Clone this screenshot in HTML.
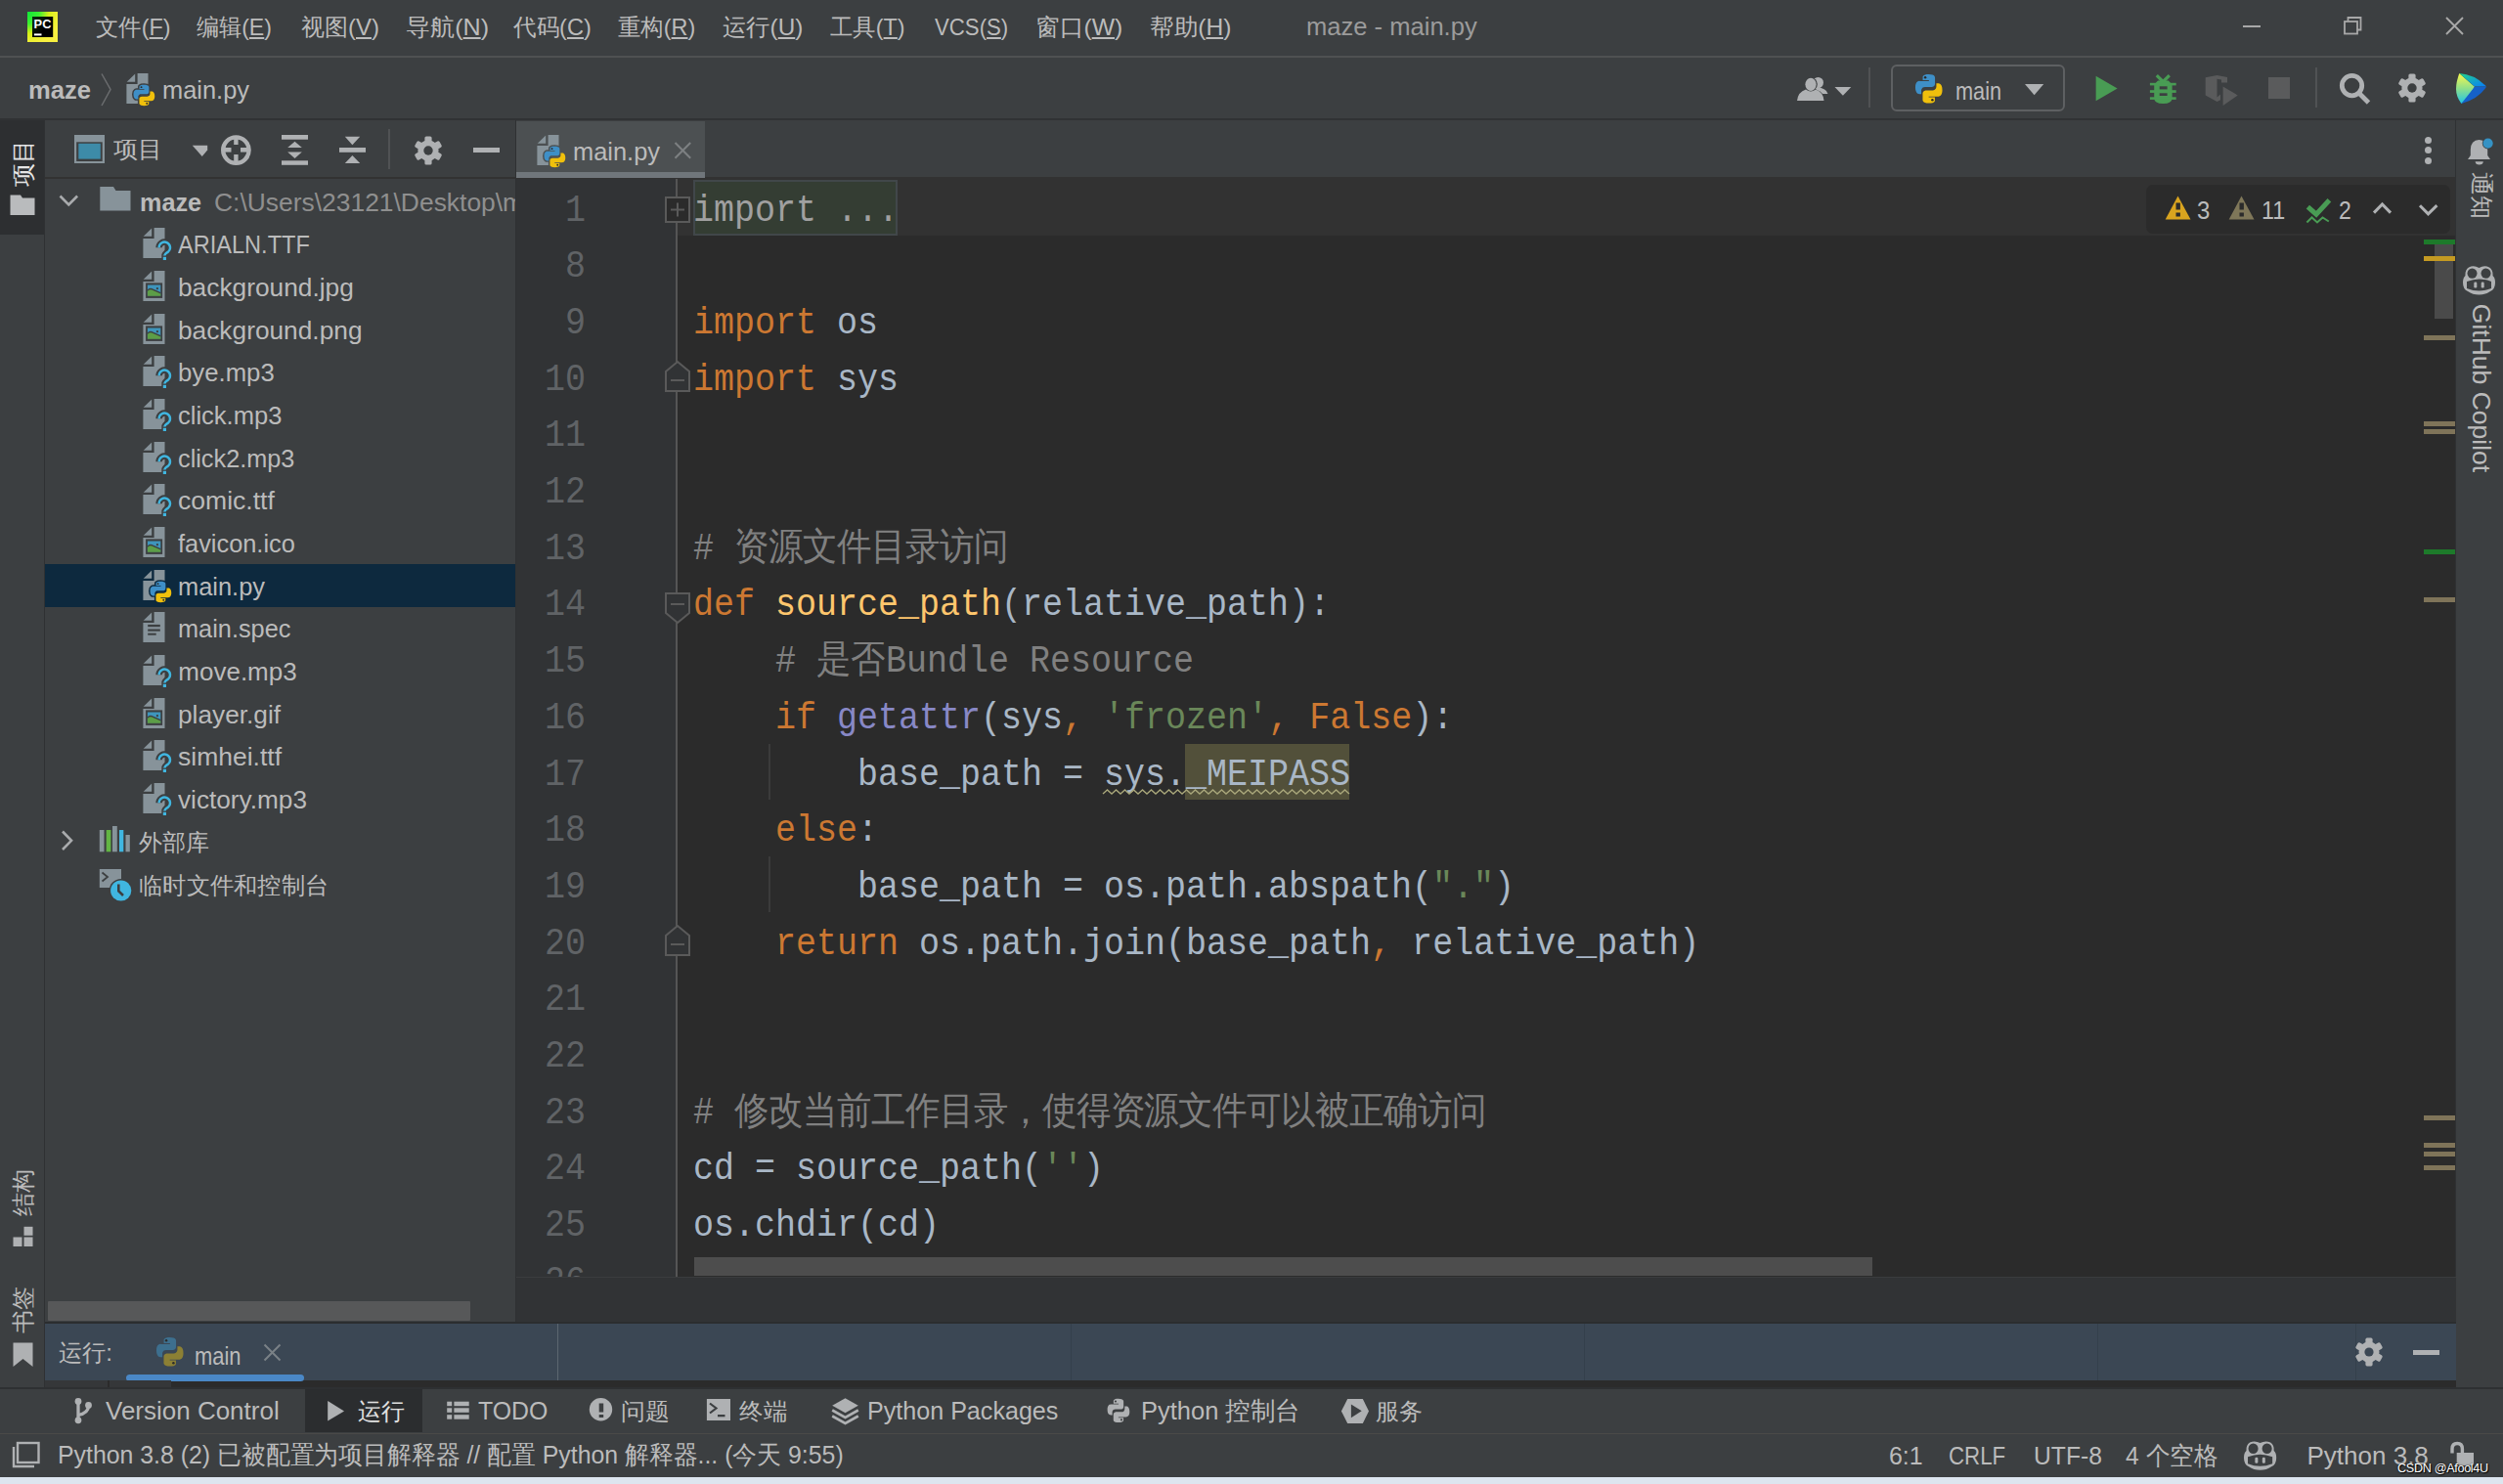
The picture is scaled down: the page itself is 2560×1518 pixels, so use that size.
<!DOCTYPE html>
<html><head><meta charset="utf-8"><title>maze - main.py</title>
<style>
html,body{margin:0;padding:0;}
body{width:2560px;height:1518px;overflow:hidden;position:relative;background:#3C3F41;font-family:"Liberation Sans",sans-serif;}
.t{position:absolute;white-space:nowrap;line-height:1;}
.u{text-decoration:underline;text-decoration-thickness:2px;text-underline-offset:2px;}
svg{overflow:visible}
.code{font-family:'Liberation Mono',monospace;font-size:38.5px;color:#A9B7C6;white-space:pre;transform:scaleX(0.9091);transform-origin:0 0;}
.lnum{font-family:'Liberation Mono',monospace;font-size:38.5px;color:#606366;width:200px;text-align:right;transform:scaleX(0.9091);transform-origin:100% 0;}
</style></head><body>
<div style="position:absolute;left:0px;top:0px;width:2560px;height:57px;background:#3C3F41;"></div>
<div style="position:absolute;left:0px;top:57px;width:2560px;height:2px;background:#4F5152;"></div>
<div style="position:absolute;left:0px;top:59px;width:2560px;height:63px;background:#3C3F41;"></div>
<div style="position:absolute;left:0px;top:121px;width:2560px;height:2px;background:#303234;"></div>
<div style="position:absolute;left:0px;top:123px;width:45px;height:1297px;background:#3C3F41;"></div>
<div style="position:absolute;left:0px;top:123px;width:45px;height:117px;background:#2D2F31;"></div>
<div style="position:absolute;left:45px;top:123px;width:1px;height:1297px;background:#2F3133;"></div>
<div style="position:absolute;left:46px;top:123px;width:481px;height:1229px;background:#3C3F41;"></div>
<div style="position:absolute;left:46px;top:181px;width:481px;height:2px;background:#323232;"></div>
<div style="position:absolute;left:527px;top:123px;width:1px;height:1229px;background:#2F3133;"></div>
<div style="position:absolute;left:528px;top:123px;width:1984px;height:58px;background:#3C3F41;"></div>
<div style="position:absolute;left:528px;top:181px;width:1984px;height:2px;background:#323232;"></div>
<div style="position:absolute;left:528px;top:124px;width:193px;height:52px;background:#4C5052;"></div>
<div style="position:absolute;left:528px;top:176px;width:193px;height:6px;background:#70767B;"></div>
<div style="position:absolute;left:528px;top:183px;width:1984px;height:1124px;background:#2B2B2B;"></div>
<div style="position:absolute;left:528px;top:183px;width:163px;height:1124px;background:#313335;"></div>
<div style="position:absolute;left:691px;top:183px;width:2px;height:1124px;background:#555555;"></div>
<div style="position:absolute;left:693px;top:183px;width:1819px;height:58px;background:#323232;"></div>
<div style="position:absolute;left:528px;top:1307px;width:1984px;height:45px;background:#313335;"></div>
<div style="position:absolute;left:528px;top:1306px;width:1984px;height:1px;background:#3A3C3E;"></div>
<div style="position:absolute;left:2512px;top:123px;width:48px;height:1297px;background:#3C3F41;"></div>
<div style="position:absolute;left:2511px;top:123px;width:1px;height:1297px;background:#2F3133;"></div>
<div style="position:absolute;left:46px;top:1352px;width:2466px;height:2px;background:#2B2D2F;"></div>
<div style="position:absolute;left:46px;top:1354px;width:2466px;height:58px;background:#3B4754;"></div>
<div style="position:absolute;left:46px;top:1412px;width:2466px;height:8px;background:#2B2B2B;"></div>
<div style="position:absolute;left:0px;top:1420px;width:2560px;height:46px;background:#3C3F41;"></div>
<div style="position:absolute;left:312px;top:1420px;width:120px;height:45px;background:#2B2D2F;"></div>
<div style="position:absolute;left:0px;top:1466px;width:2560px;height:1px;background:#4A4A48;"></div>
<div style="position:absolute;left:0px;top:1467px;width:2560px;height:45px;background:#3C3F41;"></div>
<div style="position:absolute;left:0px;top:1511px;width:2560px;height:7px;background:#DDE5EF;"></div>
<div class="t" id="t1" style="left:98px;top:15.68px;font-size:24px;color:#BBBBBB;font-family:'Liberation Sans', sans-serif;font-weight:normal;transform:scaleX(0.9744);transform-origin:0 0;">文件(<span class="u">F</span>)</div>
<div class="t" id="t2" style="left:201px;top:15.68px;font-size:24px;color:#BBBBBB;font-family:'Liberation Sans', sans-serif;font-weight:normal;transform:scaleX(0.9620);transform-origin:0 0;">编辑(<span class="u">E</span>)</div>
<div class="t" id="t3" style="left:308px;top:15.68px;font-size:24px;color:#BBBBBB;font-family:'Liberation Sans', sans-serif;font-weight:normal;transform:scaleX(1.0000);transform-origin:0 0;">视图(<span class="u">V</span>)</div>
<div class="t" id="t4" style="left:415px;top:15.68px;font-size:24px;color:#BBBBBB;font-family:'Liberation Sans', sans-serif;font-weight:normal;transform:scaleX(1.0456);transform-origin:0 0;">导航(<span class="u">N</span>)</div>
<div class="t" id="t5" style="left:525px;top:15.68px;font-size:24px;color:#BBBBBB;font-family:'Liberation Sans', sans-serif;font-weight:normal;transform:scaleX(0.9812);transform-origin:0 0;">代码(<span class="u">C</span>)</div>
<div class="t" id="t6" style="left:632px;top:15.68px;font-size:24px;color:#BBBBBB;font-family:'Liberation Sans', sans-serif;font-weight:normal;transform:scaleX(0.9750);transform-origin:0 0;">重构(<span class="u">R</span>)</div>
<div class="t" id="t7" style="left:738.5px;top:15.68px;font-size:24px;color:#BBBBBB;font-family:'Liberation Sans', sans-serif;font-weight:normal;transform:scaleX(1.0125);transform-origin:0 0;">运行(<span class="u">U</span>)</div>
<div class="t" id="t8" style="left:849px;top:15.68px;font-size:24px;color:#BBBBBB;font-family:'Liberation Sans', sans-serif;font-weight:normal;transform:scaleX(0.9744);transform-origin:0 0;">工具(<span class="u">T</span>)</div>
<div class="t" id="t9" style="left:956px;top:15.68px;font-size:24px;color:#BBBBBB;font-family:'Liberation Sans', sans-serif;font-weight:normal;transform:scaleX(0.9250);transform-origin:0 0;">VCS(<span class="u">S</span>)</div>
<div class="t" id="t10" style="left:1059px;top:15.68px;font-size:24px;color:#BBBBBB;font-family:'Liberation Sans', sans-serif;font-weight:normal;transform:scaleX(1.0298);transform-origin:0 0;">窗口(<span class="u">W</span>)</div>
<div class="t" id="t11" style="left:1176px;top:15.68px;font-size:24px;color:#BBBBBB;font-family:'Liberation Sans', sans-serif;font-weight:normal;transform:scaleX(1.0250);transform-origin:0 0;">帮助(<span class="u">H</span>)</div>
<div class="t" id="t12" style="left:1336px;top:13.99px;font-size:26px;color:#9B9B9B;font-family:'Liberation Sans', sans-serif;font-weight:normal;transform:scaleX(0.9831);transform-origin:0 0;">maze - main.py</div>
<div class="t" id="t13" style="left:29px;top:78.99px;font-size:26px;color:#BBBBBB;font-family:'Liberation Sans', sans-serif;font-weight:bold;transform:scaleX(0.9844);transform-origin:0 0;">maze</div>
<div class="t" id="t14" style="left:166px;top:78.99px;font-size:26px;color:#BBBBBB;font-family:'Liberation Sans', sans-serif;font-weight:normal;transform:scaleX(0.9778);transform-origin:0 0;">main.py</div>
<div class="t" id="t15" style="left:2000px;top:79.99px;font-size:26px;color:#BBBBBB;font-family:'Liberation Sans', sans-serif;font-weight:normal;transform:scaleX(0.8359);transform-origin:0 0;">main</div>
<div class="t" id="t16" style="left:116px;top:141.18px;font-size:24px;color:#BBBBBB;font-family:'Liberation Sans', sans-serif;font-weight:normal;transform:scaleX(1.0455);transform-origin:0 0;">项目</div>
<div class="t" id="t17" style="left:586px;top:141.99px;font-size:26px;color:#BBBBBB;font-family:'Liberation Sans', sans-serif;font-weight:normal;transform:scaleX(0.9778);transform-origin:0 0;">main.py</div>
<div class="t" id="t18" style="left:143px;top:193.59px;font-size:26px;color:#BBBBBB;font-family:'Liberation Sans', sans-serif;font-weight:bold;transform:scaleX(0.9688);transform-origin:0 0;">maze</div>
<div style="position:absolute;left:46px;top:577px;width:481px;height:43.6px;background:#0D293E;"></div>
<div style="position:absolute;left:46px;top:183px;width:481px;height:60px;overflow:hidden"><div style="position:absolute;left:-46px;top:-183px;width:2560px;height:1518px">
<div class="t" id="t19" style="left:219px;top:193.59px;font-size:26px;color:#8F8F8F;font-family:'Liberation Sans', sans-serif;font-weight:normal;transform:scaleX(1.016);transform-origin:0 0;">C:\Users\23121\Desktop\maze</div>
</div></div>
<div class="t" id="t20" style="left:182.3px;top:237.27px;font-size:26px;color:#BBBBBB;font-family:'Liberation Sans', sans-serif;font-weight:normal;transform:scaleX(0.9060);transform-origin:0 0;">ARIALN.TTF</div>
<div class="t" id="t21" style="left:182.3px;top:280.95px;font-size:26px;color:#BBBBBB;font-family:'Liberation Sans', sans-serif;font-weight:normal;transform:scaleX(1.0114);transform-origin:0 0;">background.jpg</div>
<div class="t" id="t22" style="left:182.3px;top:324.63px;font-size:26px;color:#BBBBBB;font-family:'Liberation Sans', sans-serif;font-weight:normal;transform:scaleX(1.0108);transform-origin:0 0;">background.png</div>
<div class="t" id="t23" style="left:182.3px;top:368.31px;font-size:26px;color:#BBBBBB;font-family:'Liberation Sans', sans-serif;font-weight:normal;transform:scaleX(0.9898);transform-origin:0 0;">bye.mp3</div>
<div class="t" id="t24" style="left:182.3px;top:411.99px;font-size:26px;color:#BBBBBB;font-family:'Liberation Sans', sans-serif;font-weight:normal;transform:scaleX(0.9813);transform-origin:0 0;">click.mp3</div>
<div class="t" id="t25" style="left:182.3px;top:455.67px;font-size:26px;color:#BBBBBB;font-family:'Liberation Sans', sans-serif;font-weight:normal;transform:scaleX(0.9721);transform-origin:0 0;">click2.mp3</div>
<div class="t" id="t26" style="left:182.3px;top:499.35px;font-size:26px;color:#BBBBBB;font-family:'Liberation Sans', sans-serif;font-weight:normal;transform:scaleX(1.0206);transform-origin:0 0;">comic.ttf</div>
<div class="t" id="t27" style="left:182.3px;top:543.03px;font-size:26px;color:#BBBBBB;font-family:'Liberation Sans', sans-serif;font-weight:normal;transform:scaleX(0.9756);transform-origin:0 0;">favicon.ico</div>
<div class="t" id="t28" style="left:182.3px;top:586.71px;font-size:26px;color:#BBBBBB;font-family:'Liberation Sans', sans-serif;font-weight:normal;transform:scaleX(0.9780);transform-origin:0 0;">main.py</div>
<div class="t" id="t29" style="left:182.3px;top:630.39px;font-size:26px;color:#BBBBBB;font-family:'Liberation Sans', sans-serif;font-weight:normal;transform:scaleX(0.9741);transform-origin:0 0;">main.spec</div>
<div class="t" id="t30" style="left:182.3px;top:674.07px;font-size:26px;color:#BBBBBB;font-family:'Liberation Sans', sans-serif;font-weight:normal;transform:scaleX(1.0000);transform-origin:0 0;">move.mp3</div>
<div class="t" id="t31" style="left:182.3px;top:717.75px;font-size:26px;color:#BBBBBB;font-family:'Liberation Sans', sans-serif;font-weight:normal;transform:scaleX(1.0096);transform-origin:0 0;">player.gif</div>
<div class="t" id="t32" style="left:182.3px;top:761.43px;font-size:26px;color:#BBBBBB;font-family:'Liberation Sans', sans-serif;font-weight:normal;transform:scaleX(1.0192);transform-origin:0 0;">simhei.ttf</div>
<div class="t" id="t33" style="left:182.3px;top:805.11px;font-size:26px;color:#BBBBBB;font-family:'Liberation Sans', sans-serif;font-weight:normal;transform:scaleX(1.0076);transform-origin:0 0;">victory.mp3</div>
<div class="t" id="t34" style="left:142px;top:850.48px;font-size:24px;color:#BBBBBB;font-family:'Liberation Sans', sans-serif;font-weight:normal;transform:scaleX(1.0000);transform-origin:0 0;">外部库</div>
<div class="t" id="t35" style="left:142.4px;top:894.16px;font-size:24px;color:#BBBBBB;font-family:'Liberation Sans', sans-serif;font-weight:normal;transform:scaleX(1.0106);transform-origin:0 0;">临时文件和控制台</div>
<div class="t" id="t36" style="left:60px;top:1372.18px;font-size:24px;color:#BBBBBB;font-family:'Liberation Sans', sans-serif;font-weight:normal;transform:scaleX(1.0075);transform-origin:0 0;">运行:</div>
<div class="t" id="t37" style="left:199px;top:1373.99px;font-size:26px;color:#BBBBBB;font-family:'Liberation Sans', sans-serif;font-weight:normal;transform:scaleX(0.8438);transform-origin:0 0;">main</div>
<div class="t" id="t38" style="left:107.5px;top:1429.99px;font-size:26px;color:#BBBBBB;font-family:'Liberation Sans', sans-serif;font-weight:normal;transform:scaleX(0.9994);transform-origin:0 0;">Version Control</div>
<div class="t" id="t39" style="left:365.7px;top:1431.68px;font-size:24px;color:#E0E0E0;font-family:'Liberation Sans', sans-serif;font-weight:normal;transform:scaleX(0.9958);transform-origin:0 0;">运行</div>
<div class="t" id="t40" style="left:488.5px;top:1429.99px;font-size:26px;color:#BBBBBB;font-family:'Liberation Sans', sans-serif;font-weight:normal;transform:scaleX(0.9562);transform-origin:0 0;">TODO</div>
<div class="t" id="t41" style="left:635px;top:1431.68px;font-size:24px;color:#BBBBBB;font-family:'Liberation Sans', sans-serif;font-weight:normal;transform:scaleX(1.0370);transform-origin:0 0;">问题</div>
<div class="t" id="t42" style="left:755.8px;top:1431.68px;font-size:24px;color:#BBBBBB;font-family:'Liberation Sans', sans-serif;font-weight:normal;transform:scaleX(1.0213);transform-origin:0 0;">终端</div>
<div class="t" id="t43" style="left:886.9px;top:1429.99px;font-size:26px;color:#BBBBBB;font-family:'Liberation Sans', sans-serif;font-weight:normal;transform:scaleX(0.9655);transform-origin:0 0;">Python Packages</div>
<div class="t" id="t44" style="left:1166.5px;top:1429.99px;font-size:26px;color:#BBBBBB;font-family:'Liberation Sans', sans-serif;font-weight:normal;transform:scaleX(0.9804);transform-origin:0 0;">Python 控制台</div>
<div class="t" id="t45" style="left:1407px;top:1431.68px;font-size:24px;color:#BBBBBB;font-family:'Liberation Sans', sans-serif;font-weight:normal;transform:scaleX(1.0000);transform-origin:0 0;">服务</div>
<div class="t" id="t46" style="left:58.6px;top:1474.99px;font-size:26px;color:#BBBBBB;font-family:'Liberation Sans', sans-serif;font-weight:normal;transform:scaleX(0.9558);transform-origin:0 0;">Python 3.8 (2) 已被配置为项目解释器 // 配置 Python 解释器... (今天 9:55)</div>
<div class="t" id="t47" style="left:1931.8px;top:1475.99px;font-size:26px;color:#BBBBBB;font-family:'Liberation Sans', sans-serif;font-weight:normal;transform:scaleX(0.9588);transform-origin:0 0;">6:1</div>
<div class="t" id="t48" style="left:1993px;top:1475.99px;font-size:26px;color:#BBBBBB;font-family:'Liberation Sans', sans-serif;font-weight:normal;transform:scaleX(0.8576);transform-origin:0 0;">CRLF</div>
<div class="t" id="t49" style="left:2079.5px;top:1475.99px;font-size:26px;color:#BBBBBB;font-family:'Liberation Sans', sans-serif;font-weight:normal;transform:scaleX(0.9486);transform-origin:0 0;">UTF-8</div>
<div class="t" id="t50" style="left:2174.2px;top:1475.99px;font-size:26px;color:#BBBBBB;font-family:'Liberation Sans', sans-serif;font-weight:normal;transform:scaleX(0.9475);transform-origin:0 0;">4 个空格</div>
<div class="t" id="t51" style="left:2359.5px;top:1475.99px;font-size:26px;color:#BBBBBB;font-family:'Liberation Sans', sans-serif;font-weight:normal;transform:scaleX(1.0000);transform-origin:0 0;">Python 3.8</div>
<div style="position:absolute;left:1212px;top:761px;width:168px;height:57px;background:#52503A;"></div>
<div style="position:absolute;left:709px;top:184px;width:209px;height:57px;background:#343D33;box-sizing:border-box;border:2.5px solid #41474A;"></div>
<div class="t code" style="left:709px;top:196.51px;"><span style="color:#A0A0A0">import ...</span></div>
<div class="t code" style="left:709px;top:311.91px;"><span style="color:#CC7832">import</span> os</div>
<div class="t code" style="left:709px;top:369.61px;"><span style="color:#CC7832">import</span> sys</div>
<div class="t code" style="left:709px;top:542.71px;"><span style="color:#808080"># <span style="letter-spacing:-0.55px">资源文件目录访问</span></span></div>
<div class="t code" style="left:709px;top:600.41px;"><span style="color:#CC7832">def</span> <span style="color:#FFC66D">source_path</span>(relative_path):</div>
<div class="t code" style="left:793px;top:658.11px;"><span style="color:#808080"># 是否Bundle Resource</span></div>
<div class="t code" style="left:793px;top:715.81px;"><span style="color:#CC7832">if</span> <span style="color:#8888C6">getattr</span>(sys<span style="color:#CC7832">,</span> <span style="color:#6A8759">'frozen'</span><span style="color:#CC7832">,</span> <span style="color:#CC7832">False</span>):</div>
<div class="t code" style="left:877px;top:773.51px;">base_path = sys._MEIPASS</div>
<div class="t code" style="left:793px;top:831.21px;"><span style="color:#CC7832">else</span>:</div>
<div class="t code" style="left:877px;top:888.91px;">base_path = os.path.abspath(<span style="color:#6A8759">"."</span>)</div>
<div class="t code" style="left:793px;top:946.61px;"><span style="color:#CC7832">return</span> os.path.join(base_path<span style="color:#CC7832">,</span> relative_path)</div>
<div class="t code" style="left:709px;top:1119.71px;"><span style="color:#808080"># <span style="letter-spacing:-0.55px">修改当前工作目录，使得资源文件可以被正确访问</span></span></div>
<div class="t code" style="left:709px;top:1177.41px;">cd = source_path(<span style="color:#6A8759">''</span>)</div>
<div class="t code" style="left:709px;top:1235.11px;">os.chdir(cd)</div>
<div class="t lnum" style="left:399px;top:196.51px;">1</div>
<div class="t lnum" style="left:399px;top:254.21px;">8</div>
<div class="t lnum" style="left:399px;top:311.91px;">9</div>
<div class="t lnum" style="left:399px;top:369.61px;">10</div>
<div class="t lnum" style="left:399px;top:427.31px;">11</div>
<div class="t lnum" style="left:399px;top:485.01px;">12</div>
<div class="t lnum" style="left:399px;top:542.71px;">13</div>
<div class="t lnum" style="left:399px;top:600.41px;">14</div>
<div class="t lnum" style="left:399px;top:658.11px;">15</div>
<div class="t lnum" style="left:399px;top:715.81px;">16</div>
<div class="t lnum" style="left:399px;top:773.51px;">17</div>
<div class="t lnum" style="left:399px;top:831.21px;">18</div>
<div class="t lnum" style="left:399px;top:888.91px;">19</div>
<div class="t lnum" style="left:399px;top:946.61px;">20</div>
<div class="t lnum" style="left:399px;top:1004.31px;">21</div>
<div class="t lnum" style="left:399px;top:1062.01px;">22</div>
<div class="t lnum" style="left:399px;top:1119.71px;">23</div>
<div class="t lnum" style="left:399px;top:1177.41px;">24</div>
<div class="t lnum" style="left:399px;top:1235.11px;">25</div>
<div class="t lnum" style="left:399px;top:1292.81px;">26</div>
<svg style="position:absolute;left:28px;top:12px" width="31" height="31" viewBox="0 0 31 31"><defs><radialGradient id="pcg" cx="0" cy="0" r="1.1" gradientUnits="objectBoundingBox"><stop offset="0" stop-color="#0FE83A"/><stop offset="0.35" stop-color="#3AF030"/><stop offset="0.65" stop-color="#D8F018"/><stop offset="1" stop-color="#F8F040"/></radialGradient><linearGradient id="pci" x1="0" y1="0" x2="1" y2="1"><stop offset="0" stop-color="#0A3010"/><stop offset="0.6" stop-color="#000"/></linearGradient></defs><rect width="31" height="31" fill="url(#pcg)"/><rect x="5" y="5" width="21.2" height="21" fill="url(#pci)"/><text x="6.6" y="17.2" font-family="Liberation Sans" font-weight="bold" font-size="12.8" fill="#fff">PC</text><rect x="6.9" y="22.4" width="7.6" height="2" fill="#fff"/></svg>
<div style="position:absolute;left:2294px;top:26px;width:18px;height:2px;background:#A8A8A8;"></div>
<svg style="position:absolute;left:2397px;top:17px" width="19" height="19" viewBox="0 0 19 19"><path d="M4.5 4.5V1H17.5V13.5H14" fill="none" stroke="#A8A8A8" stroke-width="1.8"/><rect x="1" y="5" width="13" height="12.5" fill="none" stroke="#A8A8A8" stroke-width="1.8"/></svg>
<svg style="position:absolute;left:2501px;top:17px" width="19" height="19" viewBox="0 0 19 19"><path d="M1 1L18 18M18 1L1 18" stroke="#A8A8A8" stroke-width="1.9"/></svg>
<svg style="position:absolute;left:103px;top:75px" width="11" height="34" viewBox="0 0 11 34"><path d="M1 0.5L10 16.5L1 33" fill="none" stroke="#6B6D6F" stroke-width="1.5"/></svg>
<svg style="position:absolute;left:129px;top:75px" width="30" height="34" viewBox="0 0 30 34"><path d="M0.7 8.8L9.2 0.5V8.8Z" fill="#87939A"/><path d="M11.6 0H22.5V31H0.4V11H11.6Z" fill="#87939A"/></svg>
<svg style="position:absolute;left:134.95px;top:86.2px;overflow:visible" width="24.8" height="22.9" viewBox="0 0 32 32" preserveAspectRatio="none"><path d="M15.9 1C9.3 1 9.7 3.9 9.7 3.9V7h6.4v1H6.5S2 7.5 2 14.6c0 7.1 3.9 6.9 3.9 6.9h2.3v-3.3s-.1-3.9 3.9-3.9h6.6s3.7.1 3.7-3.6V4.6S23 1 15.9 1z" fill="#3C3F41" stroke="#3C3F41" stroke-width="4"/><path d="M16.1 31c6.6 0 6.2-2.9 6.2-2.9V25h-6.4v-1h9.6s4.5.5 4.5-6.6c0-7.1-3.9-6.9-3.9-6.9h-2.3v3.3s.1 3.9-3.9 3.9h-6.6s-3.7-.1-3.7 3.6v6.1S9 31 16.1 31z" fill="#3C3F41" stroke="#3C3F41" stroke-width="4"/><path d="M15.9 1C9.3 1 9.7 3.9 9.7 3.9V7h6.4v1H6.5S2 7.5 2 14.6c0 7.1 3.9 6.9 3.9 6.9h2.3v-3.3s-.1-3.9 3.9-3.9h6.6s3.7.1 3.7-3.6V4.6S23 1 15.9 1z" fill="#3E8FC7"/><path d="M16.1 31c6.6 0 6.2-2.9 6.2-2.9V25h-6.4v-1h9.6s4.5.5 4.5-6.6c0-7.1-3.9-6.9-3.9-6.9h-2.3v3.3s.1 3.9-3.9 3.9h-6.6s-3.7-.1-3.7 3.6v6.1S9 31 16.1 31z" fill="#F0C00C"/><circle cx="12.3" cy="4.4" r="1.25" fill="#2B2B2B"/><circle cx="19.7" cy="27.6" r="1.25" fill="#2B2B2B"/></svg>
<svg style="position:absolute;left:1838px;top:78px" width="32" height="26" viewBox="0 0 32 26"><circle cx="21.5" cy="6.5" r="5.5" fill="#AFB1B3"/><path d="M18 10.5Q30.5 12 31.5 18H22Z" fill="#AFB1B3"/><circle cx="14" cy="8" r="6.8" fill="#3C3F41"/><path d="M6.5 12Q2 18 0.5 25.5H28Q28 16 20 14Z" fill="#3C3F41"/><ellipse cx="14" cy="8.3" rx="5.6" ry="6.6" fill="#AFB1B3"/><path d="M9 13.5Q1 16 0 25H27.5Q27 16.5 19 13.5Q14 17.5 9 13.5Z" fill="#AFB1B3"/></svg>
<svg style="position:absolute;left:1876px;top:88px" width="18" height="10" viewBox="0 0 18 10"><path d="M0.5 1H17.3L8.9 9.8Z" fill="#AFB1B3"/></svg>
<div style="position:absolute;left:1911px;top:69px;width:2px;height:41px;background:#505254;"></div>
<div style="position:absolute;left:1934px;top:66px;width:178px;height:48px;box-sizing:border-box;border:2px solid #5E6062;border-radius:6px"></div>
<svg style="position:absolute;left:1956.5px;top:74.8px;overflow:visible" width="31.5" height="31.5" viewBox="0 0 32 32" preserveAspectRatio="none"><path d="M15.9 1C9.3 1 9.7 3.9 9.7 3.9V7h6.4v1H6.5S2 7.5 2 14.6c0 7.1 3.9 6.9 3.9 6.9h2.3v-3.3s-.1-3.9 3.9-3.9h6.6s3.7.1 3.7-3.6V4.6S23 1 15.9 1z" fill="#3E8FC7"/><path d="M16.1 31c6.6 0 6.2-2.9 6.2-2.9V25h-6.4v-1h9.6s4.5.5 4.5-6.6c0-7.1-3.9-6.9-3.9-6.9h-2.3v3.3s.1 3.9-3.9 3.9h-6.6s-3.7-.1-3.7 3.6v6.1S9 31 16.1 31z" fill="#F0C00C"/><circle cx="12.3" cy="4.4" r="1.25" fill="#2B2B2B"/><circle cx="19.7" cy="27.6" r="1.25" fill="#2B2B2B"/></svg>
<svg style="position:absolute;left:2071px;top:85px" width="20" height="13" viewBox="0 0 20 13"><path d="M0 1H19.2L9.6 12.2Z" fill="#AFB1B3"/></svg>
<svg style="position:absolute;left:2143px;top:77px" width="24" height="27" viewBox="0 0 24 27"><path d="M0.6 0.7L22.6 13.5L0.6 26.2Z" fill="#499C54"/></svg>
<svg style="position:absolute;left:2198px;top:74px" width="29" height="33" viewBox="0 0 29 33"><g fill="#499C54"><path d="M8.9 2L14.3 7.3L19.7 2L21.9 4.2L16.2 9.9H12.4L6.7 4.2Z"/><path d="M9 8.5H19.8L23.6 12.5V26Q23.6 32 14.4 32Q5.2 32 5.2 26V12.5Z"/><rect x="0.9" y="10.8" width="26.8" height="2.6"/><rect x="0.9" y="18.2" width="26.8" height="2.7"/><rect x="0.9" y="25.3" width="26.8" height="2.6"/></g><rect x="10.7" y="14.3" width="7.9" height="3.1" fill="#3C3F41"/><rect x="10.7" y="21.3" width="7.9" height="2.7" fill="#3C3F41"/></svg>
<svg style="position:absolute;left:2255px;top:76px" width="35" height="33" viewBox="0 0 35 33"><path d="M12.5 1L23 3V8.5H17V5.5L12.5 4.8V23.5L16 20.5V26.3L12.5 28L0.7 21.5V3.2Z" fill="#5A5B5C"/><path d="M18.6 12.6L33.7 21.5L18.6 32Z" fill="#5A5B5C"/></svg>
<div style="position:absolute;left:2320px;top:79px;width:22px;height:22px;background:#5A5B5C;"></div>
<div style="position:absolute;left:2368px;top:69px;width:2px;height:41px;background:#505254;"></div>
<svg style="position:absolute;left:2392px;top:74px" width="33" height="34" viewBox="0 0 33 34"><circle cx="13.5" cy="13.6" r="10.2" fill="none" stroke="#AFB1B3" stroke-width="4.8"/><path d="M20.5 21L30.5 31" stroke="#AFB1B3" stroke-width="4.8"/></svg>
<svg style="position:absolute;left:2451.4px;top:74.3px" width="32" height="32" viewBox="0 0 32 32"><g transform="translate(16 16)"><circle cx="0" cy="0" r="10.6" fill="#AFB1B3"/><rect x="-3.6" y="-14.5" width="7.2" height="14.5" rx="1.6" fill="#AFB1B3" transform="rotate(0)"/><rect x="-3.6" y="-14.5" width="7.2" height="14.5" rx="1.6" fill="#AFB1B3" transform="rotate(60)"/><rect x="-3.6" y="-14.5" width="7.2" height="14.5" rx="1.6" fill="#AFB1B3" transform="rotate(120)"/><rect x="-3.6" y="-14.5" width="7.2" height="14.5" rx="1.6" fill="#AFB1B3" transform="rotate(180)"/><rect x="-3.6" y="-14.5" width="7.2" height="14.5" rx="1.6" fill="#AFB1B3" transform="rotate(240)"/><rect x="-3.6" y="-14.5" width="7.2" height="14.5" rx="1.6" fill="#AFB1B3" transform="rotate(300)"/><circle cx="0" cy="0" r="4.7" fill="#3C3F41"/></g></svg>
<svg style="position:absolute;left:2511px;top:74px" width="33" height="33" viewBox="0 0 33 33"><defs><linearGradient id="jl1" x1="0" y1="0" x2="0" y2="1"><stop offset="0" stop-color="#FCF84A"/><stop offset="0.5" stop-color="#8FE08A"/><stop offset="1" stop-color="#1EC4E8"/></linearGradient><linearGradient id="jl2" x1="0" y1="0" x2="1" y2="1"><stop offset="0" stop-color="#21D789"/><stop offset="1" stop-color="#087CFA"/></linearGradient></defs><path d="M4.3 1Q1 10 1 17Q1 25 6.4 32Q12 28 20 14.7Z" fill="url(#jl1)"/><path d="M4.3 1Q20 2 32 14.4H20Z" fill="url(#jl2)"/><path d="M20 14.7H32Q24 27 6.4 32Z" fill="#1561C9"/></svg>
<div class="t" style="left:24px;top:166.5px;font-size:24px;color:#E6E6E6;transform:translate(-50%,-50%) rotate(-90deg);">项目</div>
<svg style="position:absolute;left:10px;top:199px" width="26" height="22" viewBox="0 0 26 22"><path d="M0.5 0.5H11L13 3.5H25.5V21H0.5Z" fill="#B9BBBD"/></svg>
<div class="t" style="left:23.6px;top:1219.7px;font-size:24px;color:#BBBBBB;transform:translate(-50%,-50%) rotate(-90deg);">结构</div>
<svg style="position:absolute;left:13px;top:1254px" width="21" height="22" viewBox="0 0 21 22"><rect x="0.5" y="11.5" width="9" height="9.5" fill="#AFB1B3"/><rect x="11.5" y="11.5" width="9" height="9.5" fill="#AFB1B3"/><rect x="11.5" y="0.8" width="9" height="9" fill="#AFB1B3"/></svg>
<div class="t" style="left:23.6px;top:1340px;font-size:24px;color:#BBBBBB;transform:translate(-50%,-50%) rotate(-90deg);">书签</div>
<svg style="position:absolute;left:13px;top:1373px" width="21" height="26" viewBox="0 0 21 26"><path d="M0.5 0.5H20.5V25L10.5 17L0.5 25Z" fill="#AFB1B3"/></svg>
<svg style="position:absolute;left:76px;top:138px" width="31" height="29" viewBox="0 0 31 29"><rect width="31" height="29" fill="#87939A"/><rect x="2.2" y="7.3" width="26.5" height="19.7" fill="#3C3F41"/><rect x="4.3" y="8.8" width="22.5" height="15.8" fill="#3D8BA8"/></svg>
<svg style="position:absolute;left:196px;top:148px" width="17" height="13" viewBox="0 0 17 13"><path d="M0.8 0.8H16.2V5.5L10.7 12Z" fill="#AFB1B3"/></svg>
<svg style="position:absolute;left:225px;top:137px" width="33" height="33" viewBox="0 0 33 33"><circle cx="16.4" cy="16.6" r="13.2" fill="none" stroke="#AFB1B3" stroke-width="4.4"/><rect x="14.2" y="3.5" width="4.4" height="7.5" fill="#AFB1B3"/><rect x="14.2" y="21" width="4.4" height="8" fill="#AFB1B3"/><rect x="3.5" y="14" width="8" height="4.6" fill="#AFB1B3"/><rect x="21" y="14" width="8" height="4.6" fill="#AFB1B3"/></svg>
<svg style="position:absolute;left:287px;top:137px" width="29" height="33" viewBox="0 0 29 33"><rect x="1" y="1" width="27" height="4.7" fill="#AFB1B3"/><rect x="1" y="27.3" width="27" height="4.5" fill="#AFB1B3"/><path d="M7.2 14H21.8L14.5 7.7Z" fill="#AFB1B3"/><path d="M7.2 18.6H21.8L14.5 24.9Z" fill="#AFB1B3"/></svg>
<svg style="position:absolute;left:346px;top:139px" width="29" height="29" viewBox="0 0 29 29"><path d="M6.8 0.8H22.2L14.4 9.2Z" fill="#AFB1B3"/><rect x="1" y="12" width="27" height="4.8" fill="#AFB1B3"/><path d="M6.8 28H22.2L14.4 20Z" fill="#AFB1B3"/></svg>
<div style="position:absolute;left:397px;top:132px;width:2px;height:41px;background:#505254;"></div>
<svg style="position:absolute;left:421.5px;top:137.5px" width="32" height="32" viewBox="0 0 32 32"><g transform="translate(16 16)"><circle cx="0" cy="0" r="10.6" fill="#AFB1B3"/><rect x="-3.6" y="-14.5" width="7.2" height="14.5" rx="1.6" fill="#AFB1B3" transform="rotate(0)"/><rect x="-3.6" y="-14.5" width="7.2" height="14.5" rx="1.6" fill="#AFB1B3" transform="rotate(60)"/><rect x="-3.6" y="-14.5" width="7.2" height="14.5" rx="1.6" fill="#AFB1B3" transform="rotate(120)"/><rect x="-3.6" y="-14.5" width="7.2" height="14.5" rx="1.6" fill="#AFB1B3" transform="rotate(180)"/><rect x="-3.6" y="-14.5" width="7.2" height="14.5" rx="1.6" fill="#AFB1B3" transform="rotate(240)"/><rect x="-3.6" y="-14.5" width="7.2" height="14.5" rx="1.6" fill="#AFB1B3" transform="rotate(300)"/><circle cx="0" cy="0" r="4.7" fill="#3C3F41"/></g></svg>
<div style="position:absolute;left:484px;top:151px;width:27px;height:5px;background:#AFB1B3;"></div>
<svg style="position:absolute;left:549px;top:138px" width="30" height="34" viewBox="0 0 30 34"><path d="M0.7 8.8L9.2 0.5V8.8Z" fill="#87939A"/><path d="M11.6 0H22.5V31H0.4V11H11.6Z" fill="#87939A"/></svg>
<svg style="position:absolute;left:554.95px;top:149.2px;overflow:visible" width="24.8" height="22.9" viewBox="0 0 32 32" preserveAspectRatio="none"><path d="M15.9 1C9.3 1 9.7 3.9 9.7 3.9V7h6.4v1H6.5S2 7.5 2 14.6c0 7.1 3.9 6.9 3.9 6.9h2.3v-3.3s-.1-3.9 3.9-3.9h6.6s3.7.1 3.7-3.6V4.6S23 1 15.9 1z" fill="#4C5052" stroke="#4C5052" stroke-width="4"/><path d="M16.1 31c6.6 0 6.2-2.9 6.2-2.9V25h-6.4v-1h9.6s4.5.5 4.5-6.6c0-7.1-3.9-6.9-3.9-6.9h-2.3v3.3s.1 3.9-3.9 3.9h-6.6s-3.7-.1-3.7 3.6v6.1S9 31 16.1 31z" fill="#4C5052" stroke="#4C5052" stroke-width="4"/><path d="M15.9 1C9.3 1 9.7 3.9 9.7 3.9V7h6.4v1H6.5S2 7.5 2 14.6c0 7.1 3.9 6.9 3.9 6.9h2.3v-3.3s-.1-3.9 3.9-3.9h6.6s3.7.1 3.7-3.6V4.6S23 1 15.9 1z" fill="#3E8FC7"/><path d="M16.1 31c6.6 0 6.2-2.9 6.2-2.9V25h-6.4v-1h9.6s4.5.5 4.5-6.6c0-7.1-3.9-6.9-3.9-6.9h-2.3v3.3s.1 3.9-3.9 3.9h-6.6s-3.7-.1-3.7 3.6v6.1S9 31 16.1 31z" fill="#F0C00C"/><circle cx="12.3" cy="4.4" r="1.25" fill="#2B2B2B"/><circle cx="19.7" cy="27.6" r="1.25" fill="#2B2B2B"/></svg>
<svg style="position:absolute;left:689px;top:145px" width="19" height="18" viewBox="0 0 19 18"><path d="M1.5 1L17.2 16.8M17.2 1L1.5 16.8" stroke="#7D8082" stroke-width="2"/></svg>
<svg style="position:absolute;left:60px;top:199px" width="21" height="14" viewBox="0 0 21 14"><path d="M1.5 1.5L10.3 10.5L19.1 1.5" fill="none" stroke="#A9ABAD" stroke-width="2.6"/></svg>
<svg style="position:absolute;left:102px;top:190px" width="32" height="26" viewBox="0 0 32 26"><path d="M0.3 1H14L16.5 5H31.5V25.5H0.3Z" fill="#87939A"/></svg>
<svg style="position:absolute;left:146px;top:233.18px" width="30" height="34" viewBox="0 0 30 34"><path d="M0.7 8.8L9.2 0.5V8.8Z" fill="#87939A"/><path d="M11.6 0H22.5V31H0.4V11H11.6Z" fill="#87939A"/><path d="M16.6 20.2A5.7 5.7 0 1 1 26 24.6C23.6 25.9 22.4 26.6 22.4 28.6" fill="none" stroke="#3C3F41" stroke-width="6.5"/><rect x="19.3" y="28.3" width="6.2" height="6.2" fill="#3C3F41"/><path d="M16.6 20.2A5.7 5.7 0 1 1 26 24.6C23.6 25.9 22.4 26.6 22.4 28.6" fill="none" stroke="#40B6E0" stroke-width="2.4"/><rect x="20.8" y="29.8" width="3.2" height="3.2" fill="#40B6E0"/></svg>
<svg style="position:absolute;left:146px;top:276.86px" width="30" height="34" viewBox="0 0 30 34"><path d="M0.7 8.8L9.2 0.5V8.8Z" fill="#87939A"/><path d="M11.6 0H22.5V31H0.4V11H11.6Z" fill="#87939A"/><rect x="3.1" y="12.4" width="17" height="15.5" fill="#3C3F41"/><rect x="4.9" y="14.5" width="13.4" height="11.3" fill="#3E95BC"/><path d="M4.9 19.2Q7.5 17 10 18.2T18.3 22V25.8H4.9Z" fill="#3C3F41"/><path d="M4.9 20.7Q7.5 18.6 10 19.7T18.3 23.5V25.8H4.9Z" fill="#5C9E47"/><circle cx="14.9" cy="18.2" r="1.1" fill="#3C3F41"/></svg>
<svg style="position:absolute;left:146px;top:320.53999999999996px" width="30" height="34" viewBox="0 0 30 34"><path d="M0.7 8.8L9.2 0.5V8.8Z" fill="#87939A"/><path d="M11.6 0H22.5V31H0.4V11H11.6Z" fill="#87939A"/><rect x="3.1" y="12.4" width="17" height="15.5" fill="#3C3F41"/><rect x="4.9" y="14.5" width="13.4" height="11.3" fill="#3E95BC"/><path d="M4.9 19.2Q7.5 17 10 18.2T18.3 22V25.8H4.9Z" fill="#3C3F41"/><path d="M4.9 20.7Q7.5 18.6 10 19.7T18.3 23.5V25.8H4.9Z" fill="#5C9E47"/><circle cx="14.9" cy="18.2" r="1.1" fill="#3C3F41"/></svg>
<svg style="position:absolute;left:146px;top:364.22px" width="30" height="34" viewBox="0 0 30 34"><path d="M0.7 8.8L9.2 0.5V8.8Z" fill="#87939A"/><path d="M11.6 0H22.5V31H0.4V11H11.6Z" fill="#87939A"/><path d="M16.6 20.2A5.7 5.7 0 1 1 26 24.6C23.6 25.9 22.4 26.6 22.4 28.6" fill="none" stroke="#3C3F41" stroke-width="6.5"/><rect x="19.3" y="28.3" width="6.2" height="6.2" fill="#3C3F41"/><path d="M16.6 20.2A5.7 5.7 0 1 1 26 24.6C23.6 25.9 22.4 26.6 22.4 28.6" fill="none" stroke="#40B6E0" stroke-width="2.4"/><rect x="20.8" y="29.8" width="3.2" height="3.2" fill="#40B6E0"/></svg>
<svg style="position:absolute;left:146px;top:407.9px" width="30" height="34" viewBox="0 0 30 34"><path d="M0.7 8.8L9.2 0.5V8.8Z" fill="#87939A"/><path d="M11.6 0H22.5V31H0.4V11H11.6Z" fill="#87939A"/><path d="M16.6 20.2A5.7 5.7 0 1 1 26 24.6C23.6 25.9 22.4 26.6 22.4 28.6" fill="none" stroke="#3C3F41" stroke-width="6.5"/><rect x="19.3" y="28.3" width="6.2" height="6.2" fill="#3C3F41"/><path d="M16.6 20.2A5.7 5.7 0 1 1 26 24.6C23.6 25.9 22.4 26.6 22.4 28.6" fill="none" stroke="#40B6E0" stroke-width="2.4"/><rect x="20.8" y="29.8" width="3.2" height="3.2" fill="#40B6E0"/></svg>
<svg style="position:absolute;left:146px;top:451.58px" width="30" height="34" viewBox="0 0 30 34"><path d="M0.7 8.8L9.2 0.5V8.8Z" fill="#87939A"/><path d="M11.6 0H22.5V31H0.4V11H11.6Z" fill="#87939A"/><path d="M16.6 20.2A5.7 5.7 0 1 1 26 24.6C23.6 25.9 22.4 26.6 22.4 28.6" fill="none" stroke="#3C3F41" stroke-width="6.5"/><rect x="19.3" y="28.3" width="6.2" height="6.2" fill="#3C3F41"/><path d="M16.6 20.2A5.7 5.7 0 1 1 26 24.6C23.6 25.9 22.4 26.6 22.4 28.6" fill="none" stroke="#40B6E0" stroke-width="2.4"/><rect x="20.8" y="29.8" width="3.2" height="3.2" fill="#40B6E0"/></svg>
<svg style="position:absolute;left:146px;top:495.26px" width="30" height="34" viewBox="0 0 30 34"><path d="M0.7 8.8L9.2 0.5V8.8Z" fill="#87939A"/><path d="M11.6 0H22.5V31H0.4V11H11.6Z" fill="#87939A"/><path d="M16.6 20.2A5.7 5.7 0 1 1 26 24.6C23.6 25.9 22.4 26.6 22.4 28.6" fill="none" stroke="#3C3F41" stroke-width="6.5"/><rect x="19.3" y="28.3" width="6.2" height="6.2" fill="#3C3F41"/><path d="M16.6 20.2A5.7 5.7 0 1 1 26 24.6C23.6 25.9 22.4 26.6 22.4 28.6" fill="none" stroke="#40B6E0" stroke-width="2.4"/><rect x="20.8" y="29.8" width="3.2" height="3.2" fill="#40B6E0"/></svg>
<svg style="position:absolute;left:146px;top:538.94px" width="30" height="34" viewBox="0 0 30 34"><path d="M0.7 8.8L9.2 0.5V8.8Z" fill="#87939A"/><path d="M11.6 0H22.5V31H0.4V11H11.6Z" fill="#87939A"/><rect x="3.1" y="12.4" width="17" height="15.5" fill="#3C3F41"/><rect x="4.9" y="14.5" width="13.4" height="11.3" fill="#3E95BC"/><path d="M4.9 19.2Q7.5 17 10 18.2T18.3 22V25.8H4.9Z" fill="#3C3F41"/><path d="M4.9 20.7Q7.5 18.6 10 19.7T18.3 23.5V25.8H4.9Z" fill="#5C9E47"/><circle cx="14.9" cy="18.2" r="1.1" fill="#3C3F41"/></svg>
<svg style="position:absolute;left:146px;top:582.62px" width="30" height="34" viewBox="0 0 30 34"><path d="M0.7 8.8L9.2 0.5V8.8Z" fill="#87939A"/><path d="M11.6 0H22.5V31H0.4V11H11.6Z" fill="#87939A"/></svg>
<svg style="position:absolute;left:151.95px;top:593.82px;overflow:visible" width="24.8" height="22.9" viewBox="0 0 32 32" preserveAspectRatio="none"><path d="M15.9 1C9.3 1 9.7 3.9 9.7 3.9V7h6.4v1H6.5S2 7.5 2 14.6c0 7.1 3.9 6.9 3.9 6.9h2.3v-3.3s-.1-3.9 3.9-3.9h6.6s3.7.1 3.7-3.6V4.6S23 1 15.9 1z" fill="#0D293E" stroke="#0D293E" stroke-width="4"/><path d="M16.1 31c6.6 0 6.2-2.9 6.2-2.9V25h-6.4v-1h9.6s4.5.5 4.5-6.6c0-7.1-3.9-6.9-3.9-6.9h-2.3v3.3s.1 3.9-3.9 3.9h-6.6s-3.7-.1-3.7 3.6v6.1S9 31 16.1 31z" fill="#0D293E" stroke="#0D293E" stroke-width="4"/><path d="M15.9 1C9.3 1 9.7 3.9 9.7 3.9V7h6.4v1H6.5S2 7.5 2 14.6c0 7.1 3.9 6.9 3.9 6.9h2.3v-3.3s-.1-3.9 3.9-3.9h6.6s3.7.1 3.7-3.6V4.6S23 1 15.9 1z" fill="#3E8FC7"/><path d="M16.1 31c6.6 0 6.2-2.9 6.2-2.9V25h-6.4v-1h9.6s4.5.5 4.5-6.6c0-7.1-3.9-6.9-3.9-6.9h-2.3v3.3s.1 3.9-3.9 3.9h-6.6s-3.7-.1-3.7 3.6v6.1S9 31 16.1 31z" fill="#F0C00C"/><circle cx="12.3" cy="4.4" r="1.25" fill="#2B2B2B"/><circle cx="19.7" cy="27.6" r="1.25" fill="#2B2B2B"/></svg>
<svg style="position:absolute;left:146px;top:626.3px" width="30" height="34" viewBox="0 0 30 34"><path d="M0.7 8.8L9.2 0.5V8.8Z" fill="#87939A"/><path d="M11.6 0H22.5V31H0.4V11H11.6Z" fill="#87939A"/><rect x="5.2" y="12.9" width="12.6" height="2.3" fill="#3C3F41"/><rect x="5.2" y="17.5" width="12.6" height="2.2" fill="#3C3F41"/><rect x="5.2" y="21.7" width="8.5" height="2" fill="#3C3F41"/></svg>
<svg style="position:absolute;left:146px;top:669.98px" width="30" height="34" viewBox="0 0 30 34"><path d="M0.7 8.8L9.2 0.5V8.8Z" fill="#87939A"/><path d="M11.6 0H22.5V31H0.4V11H11.6Z" fill="#87939A"/><path d="M16.6 20.2A5.7 5.7 0 1 1 26 24.6C23.6 25.9 22.4 26.6 22.4 28.6" fill="none" stroke="#3C3F41" stroke-width="6.5"/><rect x="19.3" y="28.3" width="6.2" height="6.2" fill="#3C3F41"/><path d="M16.6 20.2A5.7 5.7 0 1 1 26 24.6C23.6 25.9 22.4 26.6 22.4 28.6" fill="none" stroke="#40B6E0" stroke-width="2.4"/><rect x="20.8" y="29.8" width="3.2" height="3.2" fill="#40B6E0"/></svg>
<svg style="position:absolute;left:146px;top:713.66px" width="30" height="34" viewBox="0 0 30 34"><path d="M0.7 8.8L9.2 0.5V8.8Z" fill="#87939A"/><path d="M11.6 0H22.5V31H0.4V11H11.6Z" fill="#87939A"/><rect x="3.1" y="12.4" width="17" height="15.5" fill="#3C3F41"/><rect x="4.9" y="14.5" width="13.4" height="11.3" fill="#3E95BC"/><path d="M4.9 19.2Q7.5 17 10 18.2T18.3 22V25.8H4.9Z" fill="#3C3F41"/><path d="M4.9 20.7Q7.5 18.6 10 19.7T18.3 23.5V25.8H4.9Z" fill="#5C9E47"/><circle cx="14.9" cy="18.2" r="1.1" fill="#3C3F41"/></svg>
<svg style="position:absolute;left:146px;top:757.34px" width="30" height="34" viewBox="0 0 30 34"><path d="M0.7 8.8L9.2 0.5V8.8Z" fill="#87939A"/><path d="M11.6 0H22.5V31H0.4V11H11.6Z" fill="#87939A"/><path d="M16.6 20.2A5.7 5.7 0 1 1 26 24.6C23.6 25.9 22.4 26.6 22.4 28.6" fill="none" stroke="#3C3F41" stroke-width="6.5"/><rect x="19.3" y="28.3" width="6.2" height="6.2" fill="#3C3F41"/><path d="M16.6 20.2A5.7 5.7 0 1 1 26 24.6C23.6 25.9 22.4 26.6 22.4 28.6" fill="none" stroke="#40B6E0" stroke-width="2.4"/><rect x="20.8" y="29.8" width="3.2" height="3.2" fill="#40B6E0"/></svg>
<svg style="position:absolute;left:146px;top:801.02px" width="30" height="34" viewBox="0 0 30 34"><path d="M0.7 8.8L9.2 0.5V8.8Z" fill="#87939A"/><path d="M11.6 0H22.5V31H0.4V11H11.6Z" fill="#87939A"/><path d="M16.6 20.2A5.7 5.7 0 1 1 26 24.6C23.6 25.9 22.4 26.6 22.4 28.6" fill="none" stroke="#3C3F41" stroke-width="6.5"/><rect x="19.3" y="28.3" width="6.2" height="6.2" fill="#3C3F41"/><path d="M16.6 20.2A5.7 5.7 0 1 1 26 24.6C23.6 25.9 22.4 26.6 22.4 28.6" fill="none" stroke="#40B6E0" stroke-width="2.4"/><rect x="20.8" y="29.8" width="3.2" height="3.2" fill="#40B6E0"/></svg>
<svg style="position:absolute;left:62px;top:849px" width="14" height="22" viewBox="0 0 14 22"><path d="M2 1.5L11 10.8L2 20" fill="none" stroke="#A9ABAD" stroke-width="2.6"/></svg>
<svg style="position:absolute;left:101px;top:844px" width="33" height="28" viewBox="0 0 33 28"><rect x="0.8" y="5" width="4.7" height="22.3" fill="#87939A"/><rect x="7.7" y="5" width="4.7" height="22.3" fill="#62B543"/><rect x="14" y="1" width="4.8" height="26.3" fill="#87939A"/><rect x="21" y="5" width="4.3" height="22.3" fill="#40B6E0"/><rect x="27.5" y="10" width="4.3" height="17.3" fill="#87939A"/></svg>
<svg style="position:absolute;left:101px;top:888px" width="36" height="35" viewBox="0 0 36 35"><rect x="0.8" y="1" width="22.2" height="19" fill="#87939A"/><path d="M3.5 4.5L9 9L3.5 13.5" fill="none" stroke="#3C3F41" stroke-width="1.8"/><circle cx="22.7" cy="23" r="12" fill="#3C3F41"/><circle cx="22.7" cy="23" r="10.6" fill="#40B6E0"/><path d="M20.3 16.5V23.5L25 28" fill="none" stroke="#3C3F41" stroke-width="2.6"/></svg>
<div style="position:absolute;left:49px;top:1331px;width:432px;height:20px;background:#575859;border-radius:1px"></div>
<svg style="position:absolute;left:680px;top:201px" width="26" height="27" viewBox="0 0 26 27"><rect x="1" y="1" width="24" height="25" fill="#2B2B2B" stroke="#5A5A5A" stroke-width="2"/><path d="M6 13.5H20M13 6.5V20.5" stroke="#5A5A5A" stroke-width="2"/></svg>
<svg style="position:absolute;left:680px;top:369px" width="26" height="32" viewBox="0 0 26 32"><path d="M1 31V11L13 1L25 11V31Z" fill="#313335" stroke="#5A5A5A" stroke-width="2"/><path d="M6 20H20" stroke="#5A5A5A" stroke-width="2"/></svg>
<svg style="position:absolute;left:680px;top:606px" width="26" height="32" viewBox="0 0 26 32"><path d="M1 1V21L13 31L25 21V1Z" fill="#313335" stroke="#5A5A5A" stroke-width="2"/><path d="M6 12H20" stroke="#5A5A5A" stroke-width="2"/></svg>
<svg style="position:absolute;left:680px;top:946.1px" width="26" height="32" viewBox="0 0 26 32"><path d="M1 31V11L13 1L25 11V31Z" fill="#313335" stroke="#5A5A5A" stroke-width="2"/><path d="M6 20H20" stroke="#5A5A5A" stroke-width="2"/></svg>
<div style="position:absolute;left:786px;top:761px;width:2px;height:57px;background:#3B3B3B;"></div>
<div style="position:absolute;left:786px;top:876px;width:2px;height:57px;background:#3B3B3B;"></div>
<svg style="position:absolute;left:1128px;top:808px" width="252" height="6" viewBox="0 0 252 6"><path d="M0 4 L4.5 0 L9 4 L13.5 0 L18 4 L22.5 0 L27 4 L31.5 0 L36 4 L40.5 0 L45 4 L49.5 0 L54 4 L58.5 0 L63 4 L67.5 0 L72 4 L76.5 0 L81 4 L85.5 0 L90 4 L94.5 0 L99 4 L103.5 0 L108 4 L112.5 0 L117 4 L121.5 0 L126 4 L130.5 0 L135 4 L139.5 0 L144 4 L148.5 0 L153 4 L157.5 0 L162 4 L166.5 0 L171 4 L175.5 0 L180 4 L184.5 0 L189 4 L193.5 0 L198 4 L202.5 0 L207 4 L211.5 0 L216 4 L220.5 0 L225 4 L229.5 0 L234 4 L238.5 0 L243 4 L247.5 0 L252 4" fill="none" stroke="#A8A67A" stroke-width="1.4"/></svg>
<div style="position:absolute;left:710px;top:1286px;width:1205px;height:19px;background:#4D4D4D;"></div>
<div style="position:absolute;left:2195px;top:188.5px;width:311px;height:50px;background:#2B2B2B;border-radius:7px"></div>
<svg style="position:absolute;left:2214px;top:200px" width="27" height="25" viewBox="0 0 27 25"><path d="M13.5 0.6L26.5 24.4H0.7Z" fill="#D9A41F"/><rect x="11.5" y="7.5" width="4.4" height="7" fill="#2B2B2B"/><rect x="11.5" y="17.5" width="4.4" height="4" fill="#2B2B2B"/></svg>
<svg style="position:absolute;left:2279px;top:200px" width="27" height="25" viewBox="0 0 27 25"><path d="M13.5 0.6L26.5 24.4H0.7Z" fill="#7F7759"/><rect x="11.5" y="7.5" width="4.4" height="7" fill="#2B2B2B"/><rect x="11.5" y="17.5" width="4.4" height="4" fill="#2B2B2B"/></svg>
<div class="t" id="t52" style="left:2247px;top:202.83px;font-size:25px;color:#BBBBBB;font-family:'Liberation Sans', sans-serif;font-weight:normal;transform:scaleX(0.9583);transform-origin:0 0;">3</div>
<div class="t" id="t53" style="left:2313px;top:202.83px;font-size:25px;color:#BBBBBB;font-family:'Liberation Sans', sans-serif;font-weight:normal;transform:scaleX(0.9333);transform-origin:0 0;">11</div>
<svg style="position:absolute;left:2358px;top:203px" width="26" height="26" viewBox="0 0 26 26"><path d="M2.4 8.6L11 16.2L24.4 1.8" fill="none" stroke="#499C54" stroke-width="5"/><path d="M1.4 24.5L6.5 19.5L12 24.5L17.5 19.5L23.8 23.5" fill="none" stroke="#499C54" stroke-width="2"/></svg>
<div class="t" id="t54" style="left:2391.5px;top:202.83px;font-size:25px;color:#BBBBBB;font-family:'Liberation Sans', sans-serif;font-weight:normal;transform:scaleX(0.9231);transform-origin:0 0;">2</div>
<svg style="position:absolute;left:2427px;top:207px" width="19" height="12" viewBox="0 0 19 12"><path d="M1 10.6L9.5 2L18 10.6" fill="none" stroke="#AFB1B3" stroke-width="3"/></svg>
<svg style="position:absolute;left:2474px;top:209px" width="20" height="12" viewBox="0 0 20 12"><path d="M1 1.2L9.5 9.8L18.4 1.2" fill="none" stroke="#AFB1B3" stroke-width="3"/></svg>
<div style="position:absolute;left:2480px;top:139.5px;width:7px;height:7px;border-radius:50%;background:#AFB1B3"></div>
<div style="position:absolute;left:2480px;top:150.0px;width:7px;height:7px;border-radius:50%;background:#AFB1B3"></div>
<div style="position:absolute;left:2480px;top:160.5px;width:7px;height:7px;border-radius:50%;background:#AFB1B3"></div>
<div style="position:absolute;left:2490px;top:245px;width:19px;height:81px;background:#4A4A4A;"></div>
<div style="position:absolute;left:2479px;top:245px;width:32px;height:5px;background:#1D7A2A;"></div>
<div style="position:absolute;left:2479px;top:262px;width:32px;height:5px;background:#C49A22;"></div>
<div style="position:absolute;left:2479px;top:343px;width:32px;height:5px;background:#7F7459;"></div>
<div style="position:absolute;left:2479px;top:430.6px;width:32px;height:5px;background:#7F7459;"></div>
<div style="position:absolute;left:2479px;top:439px;width:32px;height:5px;background:#7F7459;"></div>
<div style="position:absolute;left:2479px;top:611px;width:32px;height:5px;background:#7F7459;"></div>
<div style="position:absolute;left:2479px;top:1141px;width:32px;height:5px;background:#7F7459;"></div>
<div style="position:absolute;left:2479px;top:1169px;width:32px;height:5px;background:#7F7459;"></div>
<div style="position:absolute;left:2479px;top:1178px;width:32px;height:5px;background:#7F7459;"></div>
<div style="position:absolute;left:2479px;top:1192px;width:32px;height:5px;background:#7F7459;"></div>
<div style="position:absolute;left:2479px;top:562px;width:32px;height:4.5px;background:#1D7A2A;"></div>
<svg style="position:absolute;left:2523px;top:140px" width="32" height="30" viewBox="0 0 32 30"><path d="M12.5 3Q4 3.5 3.8 13V19L1 23H24L21.2 19V13Q21 3.5 12.5 3Z" fill="#AFB1B3"/><path d="M8.6 25.2H16.8Q16.5 28.5 12.7 28.5Q9 28.5 8.6 25.2Z" fill="#AFB1B3"/><circle cx="21.6" cy="6.6" r="5.8" fill="#3C3F41"/><circle cx="21.6" cy="6.6" r="5.1" fill="#3592C4"/></svg>
<div class="t" style="left:2537.5px;top:199.5px;font-size:24px;color:#BBBBBB;transform:translate(-50%,-50%) rotate(90deg);">通知</div>
<svg style="position:absolute;left:2518px;top:270.5px" width="35" height="31" viewBox="0 0 35 31"><g transform="scale(1.0 1.0)"><path d="M17.5 3Q12 0 7 2.5Q3 5 3.5 11Q1 13 1 18Q1 25 6 27Q11 30.5 17.5 30.5Q24 30.5 29 27Q34 25 34 18Q34 13 31.5 11Q32 5 28 2.5Q23 0 17.5 3Z" fill="#AFB1B3"/><ellipse cx="10.5" cy="8.6" rx="5" ry="5.2" fill="#3C3F41"/><ellipse cx="24.5" cy="8.6" rx="5" ry="5.2" fill="#3C3F41"/><path d="M5 17Q17.5 12 30 17V24Q17.5 29 5 24Z" fill="#3C3F41"/><rect x="12.3" y="17.5" width="3" height="6" rx="1.3" fill="#AFB1B3"/><rect x="19.7" y="17.5" width="3" height="6" rx="1.3" fill="#AFB1B3"/></g></svg>
<div class="t" style="left:2538px;top:397px;font-size:26.5px;color:#BBBBBB;transform:translate(-50%,-50%) rotate(90deg);">GitHub Copilot</div>
<svg style="position:absolute;left:157.5px;top:1366.5px;overflow:visible" width="31.5" height="31.5" viewBox="0 0 32 32" preserveAspectRatio="none"><path d="M15.9 1C9.3 1 9.7 3.9 9.7 3.9V7h6.4v1H6.5S2 7.5 2 14.6c0 7.1 3.9 6.9 3.9 6.9h2.3v-3.3s-.1-3.9 3.9-3.9h6.6s3.7.1 3.7-3.6V4.6S23 1 15.9 1z" fill="#3D6F8E"/><path d="M16.1 31c6.6 0 6.2-2.9 6.2-2.9V25h-6.4v-1h9.6s4.5.5 4.5-6.6c0-7.1-3.9-6.9-3.9-6.9h-2.3v3.3s.1 3.9-3.9 3.9h-6.6s-3.7-.1-3.7 3.6v6.1S9 31 16.1 31z" fill="#8C8034"/><circle cx="12.3" cy="4.4" r="1.25" fill="#2B2B2B"/><circle cx="19.7" cy="27.6" r="1.25" fill="#2B2B2B"/></svg>
<svg style="position:absolute;left:269px;top:1374px" width="19" height="19" viewBox="0 0 19 19"><path d="M1.5 1.5L17.5 17.5M17.5 1.5L1.5 17.5" stroke="#7A8186" stroke-width="2"/></svg>
<div style="position:absolute;left:129px;top:1405.5px;width:182px;height:7px;border-radius:3.5px;background:#4A88C7"></div>
<div style="position:absolute;left:570px;top:1354px;width:1px;height:58px;background:#5B6670;"></div>
<div style="position:absolute;left:1095px;top:1354px;width:1px;height:58px;background:#34404C;"></div>
<div style="position:absolute;left:1620px;top:1354px;width:1px;height:58px;background:#34404C;"></div>
<div style="position:absolute;left:2145px;top:1354px;width:1px;height:58px;background:#34404C;"></div>
<div style="position:absolute;left:2409px;top:1354px;width:1px;height:58px;background:#34404C;"></div>
<svg style="position:absolute;left:2406.8px;top:1367.4px" width="32" height="32" viewBox="0 0 32 32"><g transform="translate(16 16)"><circle cx="0" cy="0" r="10.5" fill="#AFB1B3"/><rect x="-3.6" y="-14.4" width="7.2" height="14.4" rx="1.6" fill="#AFB1B3" transform="rotate(0)"/><rect x="-3.6" y="-14.4" width="7.2" height="14.4" rx="1.6" fill="#AFB1B3" transform="rotate(60)"/><rect x="-3.6" y="-14.4" width="7.2" height="14.4" rx="1.6" fill="#AFB1B3" transform="rotate(120)"/><rect x="-3.6" y="-14.4" width="7.2" height="14.4" rx="1.6" fill="#AFB1B3" transform="rotate(180)"/><rect x="-3.6" y="-14.4" width="7.2" height="14.4" rx="1.6" fill="#AFB1B3" transform="rotate(240)"/><rect x="-3.6" y="-14.4" width="7.2" height="14.4" rx="1.6" fill="#AFB1B3" transform="rotate(300)"/><circle cx="0" cy="0" r="4.6" fill="#3B4754"/></g></svg>
<div style="position:absolute;left:2468px;top:1380.6px;width:27px;height:5.2px;background:#AFB1B3;"></div>
<svg style="position:absolute;left:74px;top:1429px" width="22" height="28" viewBox="0 0 22 28"><g fill="none" stroke="#AFB1B3" stroke-width="3.3"><path d="M6 4.5V23.8"/><path d="M16.5 8.5Q16.5 16.5 6 18.5"/></g><circle cx="6" cy="4.5" r="3.4" fill="#AFB1B3"/><circle cx="6" cy="23.8" r="3.4" fill="#AFB1B3"/><circle cx="16.5" cy="8.5" r="3.4" fill="#AFB1B3"/></svg>
<svg style="position:absolute;left:335px;top:1432px" width="18" height="22" viewBox="0 0 18 22"><path d="M0.2 1L17 11.5L0.2 21.6Z" fill="#AFB1B3"/></svg>
<svg style="position:absolute;left:457px;top:1433px" width="23" height="19" viewBox="0 0 23 19"><g fill="#AFB1B3"><rect x="0.2" y="0.7" width="5" height="4.5"/><rect x="0.2" y="7.3" width="5" height="4.5"/><rect x="0.2" y="14.2" width="5" height="4.5"/><rect x="7.4" y="0.7" width="15.3" height="4.5"/><rect x="7.4" y="7.3" width="15.3" height="4.5"/><rect x="7.4" y="14.2" width="15.3" height="4.5"/></g></svg>
<svg style="position:absolute;left:602px;top:1429px" width="25" height="25" viewBox="0 0 25 25"><circle cx="12.5" cy="12.8" r="11.7" fill="#AFB1B3"/><rect x="10.7" y="6.5" width="4.5" height="9" fill="#3C3F41"/><rect x="10.7" y="18" width="4.5" height="3" fill="#3C3F41"/></svg>
<svg style="position:absolute;left:722px;top:1430px" width="26" height="24" viewBox="0 0 26 24"><rect x="0.9" y="1" width="24.1" height="22" fill="#AFB1B3"/><path d="M4 5.5L10.5 10.5L4 15.5" fill="none" stroke="#3C3F41" stroke-width="2.2"/><rect x="12" y="17" width="7.5" height="2.3" fill="#3C3F41"/></svg>
<svg style="position:absolute;left:850px;top:1429px" width="29" height="29" viewBox="0 0 29 29"><path d="M14.5 1.2L27.8 8.8L14.5 16.3L1.2 8.8Z" fill="#AFB1B3"/><path d="M1.2 13.5L14.5 21L27.8 13.5" fill="none" stroke="#AFB1B3" stroke-width="2.6"/><path d="M1.2 19.5L14.5 27L27.8 19.5" fill="none" stroke="#AFB1B3" stroke-width="2.6"/></svg>
<svg style="position:absolute;left:1131px;top:1430px" width="27" height="26" viewBox="0 0 27 26"><g transform="scale(0.81)"><path d="M15.9 1C9.3 1 9.7 3.9 9.7 3.9V7h6.4v1H6.5S2 7.5 2 14.6c0 7.1 3.9 6.9 3.9 6.9h2.3v-3.3s-.1-3.9 3.9-3.9h6.6s3.7.1 3.7-3.6V4.6S23 1 15.9 1z" fill="#AFB1B3"/><path d="M16.1 31c6.6 0 6.2-2.9 6.2-2.9V25h-6.4v-1h9.6s4.5.5 4.5-6.6c0-7.1-3.9-6.9-3.9-6.9h-2.3v3.3s.1 3.9-3.9 3.9h-6.6s-3.7-.1-3.7 3.6v6.1S9 31 16.1 31z" fill="#AFB1B3"/><circle cx="12.3" cy="4.4" r="1.3" fill="#3C3F41"/><circle cx="19.7" cy="27.6" r="1.3" fill="#3C3F41"/></g></svg>
<svg style="position:absolute;left:1371px;top:1430px" width="30" height="27" viewBox="0 0 30 27"><path d="M7.2 1H22.8L29 13.5L22.8 26H7.2L0.9 13.5Z" fill="#AFB1B3"/><path d="M10.9 6.4L21.7 13.3L10.9 20.2Z" fill="#3C3F41"/></svg>
<svg style="position:absolute;left:12px;top:1474px" width="29" height="28" viewBox="0 0 29 28"><rect x="6" y="2" width="21.5" height="20" fill="none" stroke="#AFB1B3" stroke-width="2.4"/><path d="M2 6V26H23" fill="none" stroke="#AFB1B3" stroke-width="2.4"/></svg>
<svg style="position:absolute;left:2294px;top:1472.7px" width="35.2" height="31.3" viewBox="0 0 35.2 31.3"><g transform="scale(1.0057142857142858 1.0096774193548388)"><path d="M17.5 3Q12 0 7 2.5Q3 5 3.5 11Q1 13 1 18Q1 25 6 27Q11 30.5 17.5 30.5Q24 30.5 29 27Q34 25 34 18Q34 13 31.5 11Q32 5 28 2.5Q23 0 17.5 3Z" fill="#AFB1B3"/><ellipse cx="10.5" cy="8.6" rx="5" ry="5.2" fill="#3C3F41"/><ellipse cx="24.5" cy="8.6" rx="5" ry="5.2" fill="#3C3F41"/><path d="M5 17Q17.5 12 30 17V24Q17.5 29 5 24Z" fill="#3C3F41"/><rect x="12.3" y="17.5" width="3" height="6" rx="1.3" fill="#AFB1B3"/><rect x="19.7" y="17.5" width="3" height="6" rx="1.3" fill="#AFB1B3"/></g></svg>
<svg style="position:absolute;left:2505px;top:1474px" width="27" height="27" viewBox="0 0 27 27"><path d="M3 12.5V8Q3 2.5 8.2 2.5Q13.4 2.5 13.4 8V12" fill="none" stroke="#AFB1B3" stroke-width="3.4"/><rect x="7.7" y="12" width="17.3" height="13" fill="#AFB1B3"/></svg>
<div class="t" style="left:2452px;top:1495.5px;font-size:12.6px;color:#FFFFFF;text-shadow:0 0 2px #000,1px 1px 1px #000;letter-spacing:-0.3px">CSDN @Afool4U</div>
<div style="position:absolute;left:528px;top:1307px;width:1984px;height:45px;background:#313335;"></div>
<div style="position:absolute;left:528px;top:1306px;width:1984px;height:1px;background:#3A3C3E;"></div>
<div style="position:absolute;left:46px;top:1412px;width:64px;height:8px;background:#353739;"></div>
<div style="position:absolute;left:112px;top:1412px;width:63px;height:8px;background:#353739;"></div>
<div style="position:absolute;left:0px;top:1419px;width:2560px;height:2px;background:#2E3032;"></div>
</body></html>
